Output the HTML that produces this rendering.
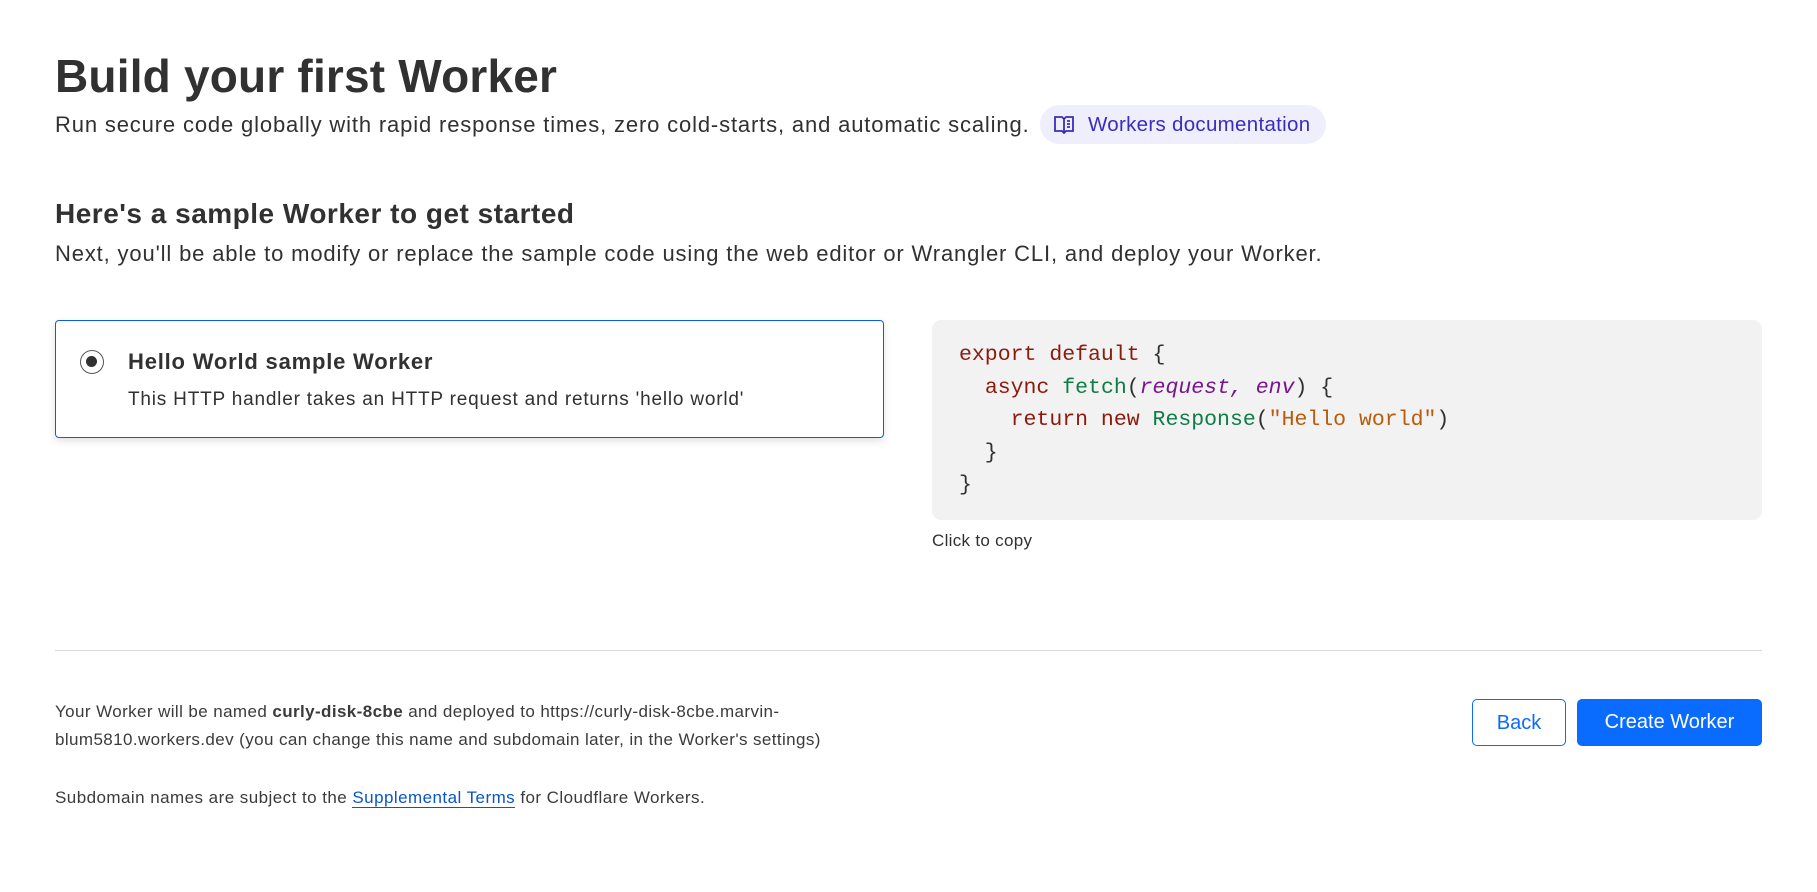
<!DOCTYPE html>
<html><head><meta charset="utf-8"><style>
*{margin:0;padding:0;box-sizing:border-box}
body{width:1817px;height:892px;background:#fff;font-family:"Liberation Sans",sans-serif;color:#313131;position:relative;overflow:hidden}
.a{position:absolute;white-space:nowrap}
h1{position:absolute;left:55px;top:49px;font-size:46px;font-weight:bold;color:#313131;letter-spacing:0.2px}
.pill{position:absolute;left:1040px;top:105px;width:286px;height:39px;border-radius:20px;background:#efeefc;color:#3a2cc0;font-size:20.5px;line-height:39px;padding-left:48px;letter-spacing:0.3px}
.card{position:absolute;left:55px;top:320px;width:829px;height:118px;border:1.5px solid #0a5fd6;border-radius:4px;box-shadow:0 3px 8px rgba(0,0,0,.12)}
.code{position:absolute;left:932px;top:320px;width:830px;height:200px;background:#f2f2f2;border-radius:9px;font-family:"Liberation Mono",monospace;font-size:21.5px;color:#313131;padding:19px 0 0 27px;line-height:32.5px;white-space:pre}
.k{color:#8b1a0d}.f{color:#0e7c49}.p{color:#7a1391;font-style:italic}.s{color:#b85b0c}
.btn{position:absolute;top:699px;height:47px;border-radius:5px;font-size:20px;text-align:center;line-height:46px}
</style></head><body>
<h1>Build your first Worker</h1>
<div class="a" style="left:55px;top:112px;font-size:22px;letter-spacing:0.85px">Run secure code globally with rapid response times, zero cold-starts, and automatic scaling.</div>
<div class="pill"><svg style="position:absolute;left:14px;top:10px" width="20" height="19" viewBox="0 0 20 19" fill="none" stroke="#3a2cc0" stroke-width="1.8"><path d="M1 2h7l2 2 2-2h7v14h-7l-2 2-2-2H1z"/><path d="M10 4v14M13 6h3M13 9h3M13 12h3"/></svg>Workers documentation</div>
<div class="a" style="left:55px;top:198px;font-size:28px;font-weight:bold;letter-spacing:0.5px">Here's a sample Worker to get started</div>
<div class="a" style="left:55px;top:241px;font-size:22px;letter-spacing:0.85px">Next, you'll be able to modify or replace the sample code using the web editor or Wrangler CLI, and deploy your Worker.</div>
<div class="card">
<div class="a" style="left:24px;top:29px;width:24px;height:24px;border:1.5px solid #555;border-radius:50%"><div style="position:absolute;left:5px;top:5px;width:11px;height:11px;border-radius:50%;background:#313131"></div></div>
<div class="a" style="left:72px;top:28px;font-size:22px;font-weight:bold;letter-spacing:0.8px">Hello World sample Worker</div>
<div class="a" style="left:72px;top:68px;font-size:19px;letter-spacing:0.8px">This HTTP handler takes an HTTP request and returns 'hello world'</div>
</div>
<div class="code"><span class="k">export default</span> {
  <span class="k">async</span> <span class="f">fetch</span>(<span class="p">request, env</span>) {
    <span class="k">return new</span> <span class="f">Response</span>(<span class="s">"Hello world"</span>)
  }
}</div>
<div class="a" style="left:932px;top:531px;font-size:17px;letter-spacing:0.3px">Click to copy</div>
<div class="a" style="left:55px;top:650px;width:1707px;height:1px;background:#d9d9d9"></div>
<div class="a" style="left:55px;top:698px;font-size:17px;line-height:28px;color:#3b3b3b;letter-spacing:0.4px">Your Worker will be named <b>curly-disk-8cbe</b> and deployed to https://curly-disk-8cbe.marvin-<br>blum5810.workers.dev (you can change this name and subdomain later, in the Worker's settings)</div>
<div class="a" style="left:55px;top:788px;font-size:17px;color:#3b3b3b;letter-spacing:0.45px">Subdomain names are subject to the <span style="color:#0a55c8;border-bottom:1px solid #0a55c8">Supplemental Terms</span> for Cloudflare Workers.</div>
<div class="btn" style="left:1472px;width:94px;border:1.5px solid #0a6cff;color:#0a6cff">Back</div>
<div class="btn" style="left:1577px;width:185px;background:#0a6cff;color:#fff">Create Worker</div>
</body></html>
